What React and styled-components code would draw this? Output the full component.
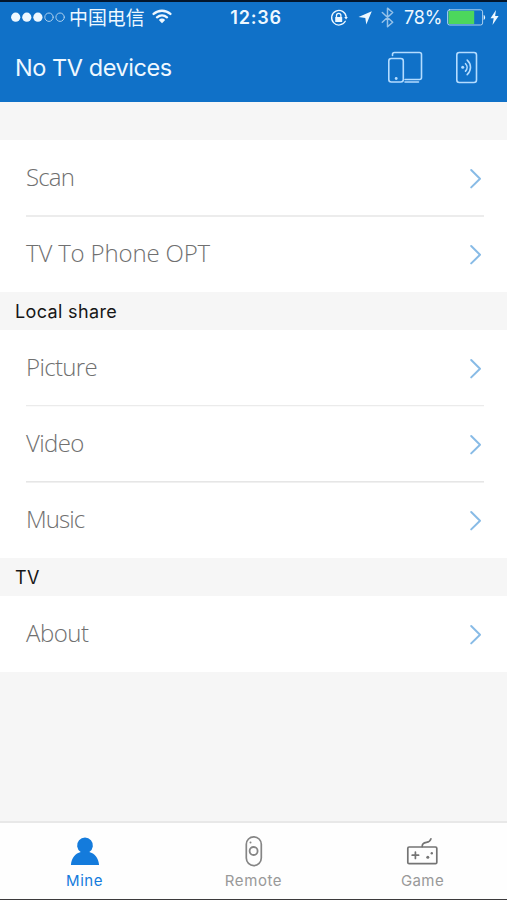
import React from "react";
import styled, { createGlobalStyle } from "styled-components";

const GlobalStyle = createGlobalStyle`
  * { box-sizing: border-box; }
  body { margin: 0; background: #f6f6f6; }
`;

const Screen = styled.div`
  width: 507px;
  height: 900px;
  display: flex;
  flex-direction: column;
  overflow: hidden;
  background: #f6f6f6;
  border-top: 2px solid #03152b;
  border-bottom: 1px solid #3c3a3c;
  font-family: Inter, "Noto Sans CJK SC", sans-serif;
`;

const StatusBar = styled.div`
  flex: none;
  height: 32px;
  display: grid;
  grid-template-columns: 220px 72px 1fr;
  align-items: center;
  background: #1071c8;
  color: #eef8ff;
`;

const Carrier = styled.div`
  display: flex;
  align-items: center;
  padding-left: 11px;
`;

const CarrierName = styled.span`
  width: 77px;
  margin: 0 6px 2px 4px;
  font: 400 18.9px/30px "Noto Sans CJK SC", sans-serif;
  white-space: nowrap;
`;

const Clock = styled.div`
  text-align: center;
  font-size: 18px;
  font-weight: 600;
  line-height: 32px;
  letter-spacing: 0.8px;
`;

const Indicators = styled.div`
  display: flex;
  align-items: center;
  padding-left: 38px;
`;

const Percent = styled.span`
  width: 40px;
  margin: 0 3px 0 10px;
  font-size: 18px;
  line-height: 32px;
  letter-spacing: -0.1px;
  white-space: nowrap;
`;

const Icon = styled.svg`
  display: block;
  flex: none;
  overflow: visible;
  fill: none;
  color: ${(p) => p.$tint || "inherit"};
  stroke: currentColor;
  stroke-linecap: round;
  stroke-linejoin: round;
  margin-left: ${(p) => p.$gap || 0}px;
`;

const Header = styled.header`
  flex: none;
  height: 68px;
  display: flex;
  align-items: center;
  padding: 0 29px 0 15px;
  background: #1071c8;
  color: #eef8ff;
`;

const Title = styled.h1`
  flex: 1;
  margin: 0;
  font-size: 23.5px;
  font-weight: 400;
  line-height: 68px;
  letter-spacing: -0.45px;
`;

const HeaderActions = styled.div`
  display: flex;
  align-items: center;
  gap: 33px;
  color: #b4dcff;
`;

const Main = styled.main`
  flex: 1;
  padding-top: ${(p) => p.$top}px;
`;

const SectionTitle = styled.h2`
  height: 38px;
  margin: 0;
  padding-left: 15px;
  background: #f6f6f6;
  color: #161616;
  font-size: 18px;
  font-weight: 400;
  line-height: 39px;
  letter-spacing: 0.36px;
`;

const List = styled.div`
  background: #fff;
  padding: 0 23px 0 26px;
`;

const Row = styled.div`
  height: 76px;
  display: flex;
  align-items: center;
  justify-content: space-between;
  padding-right: 2px;
  box-shadow: ${(p) => (p.$line ? `0 1px 0 ${p.$line[1]}, inset 0 -1px 0 ${p.$line[0]}` : "none")};
`;

const RowLabel = styled.span`
  font: 300 24px/74px "Open Sans", "Noto Sans", sans-serif;
  height: 76px;
  letter-spacing: ${(p) => p.$spacing}px;
  color: #707070;
`;

const TabBar = styled.nav`
  flex: none;
  height: 78px;
  display: grid;
  grid-template-columns: repeat(3, 1fr);
  background: #fefefe;
  border-top: 2px solid #e8e8e8;
`;

const Tab = styled.div`
  display: flex;
  flex-direction: column;
  align-items: center;
  padding-top: 12px;
  color: ${(p) => (p.$active ? "#147bdc" : "#999999")};
`;

const TabLabel = styled.span`
  margin-top: 3px;
  font-size: 15px;
  line-height: 22px;
  letter-spacing: ${(p) => p.$spacing}px;
`;

const Chevron = () => (
  <Icon $tint="#88bbe6" width="12" height="20" viewBox="0 0 12 20" strokeWidth="2">
    <path d="M1.2 2 10 10.7 1.2 19.4" />
  </Icon>
);

const Signal = () => (
  <Icon width="54" height="10" viewBox="0 0 54 10" strokeWidth="1">
    <g fill="currentColor" stroke="none">
      <circle cx="4.7" cy="4.2" r="4.6" />
      <circle cx="15.8" cy="4.2" r="4.6" />
      <circle cx="26.9" cy="4.2" r="4.6" />
    </g>
    <g opacity=".7">
      <circle cx="38" cy="4.2" r="4.2" />
      <circle cx="49.1" cy="4.2" r="4.2" />
    </g>
  </Icon>
);

const Wifi = () => (
  <Icon width="20" height="16" viewBox="0 0 20 16" strokeWidth="2.4">
    <path d="M1.6 3.9a12.6 12.6 0 0 1 16.8 0M5 7.3a7.7 7.7 0 0 1 10 0" />
    <path d="M6.8 10a4.7 4.7 0 0 1 6.4 0L10 13.3z" fill="currentColor" stroke="none" />
  </Icon>
);

const RotationLock = () => (
  <Icon width="18" height="18" viewBox="0 0 18 18" strokeWidth="1.3">
    <path d="M15.3 12.3A7.3 7.3 0 1 1 16.2 8" />
    <path d="m14.2 8.1 3.6-.2-1.7 2.5z" fill="currentColor" stroke="none" />
    <rect x="5.2" y="8" width="7" height="5" rx=".5" fill="currentColor" stroke="none" />
    <path d="M6.5 8V6.5a2.2 2.2 0 0 1 4.4 0V8" />
  </Icon>
);

const LocationArrow = () => (
  <Icon $gap="10" width="14" height="14" viewBox="0 0 14 14">
    <path d="M13.8.3 8.3 13.5 7.3 7 .5 6z" fill="currentColor" stroke="none" />
  </Icon>
);

const Bluetooth = () => (
  <Icon $gap="9" width="13" height="20" viewBox="0 0 13 20" strokeWidth="1.5" opacity=".6">
    <path d="m1.3 4.5 10.4 9.7-5.2 4.6V.2l5.2 4.3-10.4 9.7" />
  </Icon>
);

const Battery = () => (
  <Icon width="38" height="18" viewBox="0 0 38 18" strokeWidth="1">
    <rect x=".6" y=".8" width="35" height="15.2" rx="2" opacity=".7" />
    <rect x="1.5" y="1.7" width="25.7" height="13.4" rx=".7" fill="#4cd75c" stroke="none" />
    <path d="M36.7 6c1.9.5 1.9 4.4 0 4.9z" fill="currentColor" stroke="none" />
  </Icon>
);

const Bolt = () => (
  <Icon $gap="5" width="9" height="16" viewBox="0 0 9 16">
    <path d="M6 0 .5 8.2h3.2L2.5 15 8.6 6.1H5.1z" fill="currentColor" stroke="none" />
  </Icon>
);

const Devices = () => (
  <Icon width="35" height="32" viewBox="0 0 35 32" strokeWidth="1.6">
    <rect x=".8" y="6.5" width="14.5" height="23.5" rx="2.5" />
    <path d="M4.5 3.5v-1a2 2 0 0 1 2-2h25a2 2 0 0 1 2 2v23a2 2 0 0 1-2 2H17M17 30H30.5" />
    <circle cx="8.2" cy="26.5" r="1.4" fill="currentColor" stroke="none" />
  </Icon>
);

const PhoneCast = () => (
  <Icon width="22" height="32" viewBox="0 0 22 32" strokeWidth="1.6">
    <rect x=".8" y=".5" width="19.7" height="30" rx="2.5" />
    <circle cx="6.7" cy="15.3" r="1.5" fill="currentColor" stroke="none" />
    <path d="M9.5 11.7c2.1 2.1 2.1 5.2 0 7.4M11.2 8.1c4.4 4 4.4 10.4 0 14.5" />
  </Icon>
);

const Person = () => (
  <Icon width="30" height="32" viewBox="0 0 30 32">
    <path
      d="M10.7 17.1C5.5 18.4 1.6 22.7.9 30h28.2c-.7-7.3-4.6-11.6-9.8-12.9a7.9 7.9 0 1 0-8.6 0z"
      fill="currentColor"
      stroke="none"
    />
  </Icon>
);

const RemoteIcon = () => (
  <Icon $tint="#858585" width="18" height="32" viewBox="0 0 18 32" strokeWidth="1.7">
    <rect x="1.3" y="1.8" width="15" height="28.8" rx="7.5" />
    <circle cx="8.6" cy="16" r="4" strokeWidth="1.8" />
    <circle cx="5.5" cy="7.4" r="1" fill="currentColor" stroke="none" />
  </Icon>
);

const Gamepad = () => (
  <Icon $tint="#747474" width="32" height="32" viewBox="0 0 32 32" strokeWidth="1.7">
    <rect x=".8" y="12" width="29" height="16.7" rx="1.3" />
    <path d="M15.2 11.6c-.2-3 1.4-3.8 4.2-4.2 2.9-.4 4-1.4 4.5-3.5" />
    <path d="M5.2 20.2h6.4M8.4 17v6.4" />
    <g fill="currentColor" stroke="none">
      <circle cx="20.8" cy="22.3" r="1.5" />
      <circle cx="24.8" cy="18.2" r="1.2" />
    </g>
  </Icon>
);

const groups = [
  {
    rows: [
      { label: "Scan", spacing: -0.85, line: ["#ececec", "#ececec"] },
      { label: "TV To Phone OPT", spacing: -0.16 },
    ],
  },
  {
    title: "Local share",
    rows: [
      { label: "Picture", spacing: -0.65, line: ["#ebebeb", "#fafafa"] },
      { label: "Video", spacing: -0.6, line: ["#e6e6e6", "#f0f0f0"] },
      { label: "Music", spacing: -0.95 },
    ],
  },
  { title: "TV", rows: [{ label: "About", spacing: -0.5 }] },
];

const tabs = [
  { label: "Mine", Glyph: Person, active: true, spacing: 0.5 },
  { label: "Remote", Glyph: RemoteIcon, spacing: 0.6 },
  { label: "Game", Glyph: Gamepad, spacing: 0.4 },
];

export default function App() {
  return (
    <>
      <GlobalStyle />
      <Screen>
        <StatusBar>
          <Carrier>
            <Signal />
            <CarrierName>中国电信</CarrierName>
            <Wifi />
          </Carrier>
          <Clock>12:36</Clock>
          <Indicators>
            <RotationLock />
            <LocationArrow />
            <Bluetooth />
            <Percent>78%</Percent>
            <Battery />
            <Bolt />
          </Indicators>
        </StatusBar>
        <Header>
          <Title>No TV devices</Title>
          <HeaderActions>
            <Devices />
            <PhoneCast />
          </HeaderActions>
        </Header>
        <Main $top={38}>
          {groups.map((group, i) => (
            <section key={i}>
              {group.title && <SectionTitle>{group.title}</SectionTitle>}
              <List>
                {group.rows.map((row) => (
                  <Row key={row.label} $line={row.line}>
                    <RowLabel $spacing={row.spacing}>{row.label}</RowLabel>
                    <Chevron />
                  </Row>
                ))}
              </List>
            </section>
          ))}
        </Main>
        <TabBar>
          {tabs.map(({ label, Glyph, active, spacing }) => (
            <Tab key={label} $active={active}>
              <Glyph />
              <TabLabel $spacing={spacing}>{label}</TabLabel>
            </Tab>
          ))}
        </TabBar>
      </Screen>
    </>
  );
}
